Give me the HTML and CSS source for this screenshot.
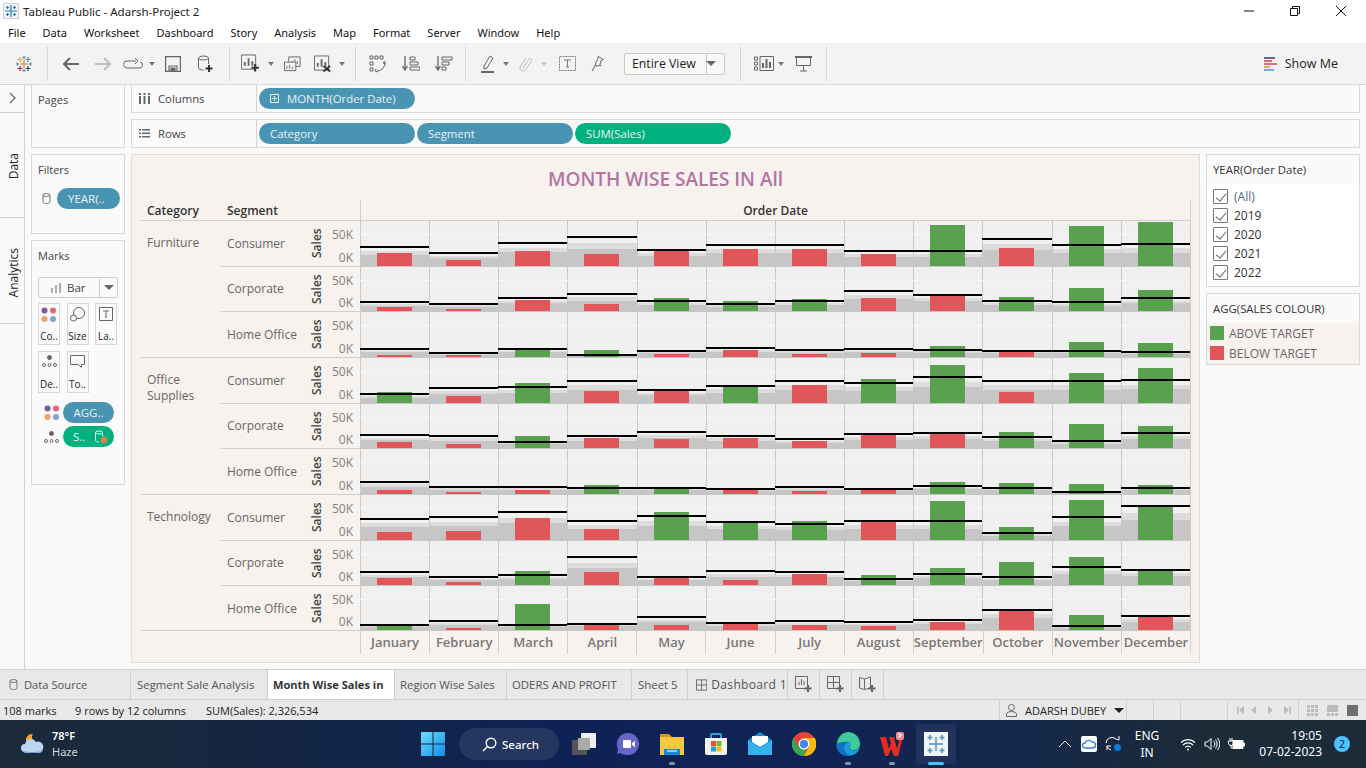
FILE: index.html
```html
<!DOCTYPE html>
<html lang="en">
<head>
<meta charset="utf-8">
<title>Tableau Public - Adarsh-Project 2</title>
<link rel="stylesheet" href="styles.css">
</head>
<body>
<div class="app">
  <header class="titlebar">
    <svg class="app-logo" width="16" height="16" viewBox="0 0 16 16"><rect x=".5" y=".5" width="15" height="15" fill="#eef4f8" stroke="#ccd"/><g stroke="#2f7ea8" stroke-width="1.2"><path d="M8 2v12M2 8h12"/><path d="M4.5 3v3M3 4.5h3M11.5 3v3M10 4.5h3M4.5 10v3M3 11.5h3M11.5 10v3M10 11.5h3"/></g></svg>
    <span class="title-text">Tableau Public - Adarsh-Project 2</span>
    <div class="winctl">
      <svg width="12" height="12" viewBox="0 0 12 12"><path d="M1 6h10" stroke="#111"/></svg>
      <svg width="12" height="12" viewBox="0 0 12 12"><path d="M1.5 3.5h7v7h-7zM3.5 3.5v-2h7v7h-2" fill="none" stroke="#111"/></svg>
      <svg width="12" height="12" viewBox="0 0 12 12"><path d="M1 1l10 10M11 1L1 11" stroke="#111"/></svg>
    </div>
  </header>
  <nav class="menubar"><span>File</span><span>Data</span><span>Worksheet</span><span>Dashboard</span><span>Story</span><span>Analysis</span><span>Map</span><span>Format</span><span>Server</span><span>Window</span><span>Help</span></nav>
  <div class="toolbar">
    <div class="tgroup g-logo">
      <svg width="18" height="18" viewBox="0 0 18 18" fill="none" stroke-width="1.1"><path d="M9 5v8M5 9h8" stroke="#e8762b"/><path d="M5 2v5M2.5 4.5h5" stroke="#e8a33d"/><path d="M13 2v5M10.5 4.5h5" stroke="#5b879b"/><path d="M5 11v5M2.500 13.500h5" stroke="#c72037"/><path d="M13 11v5M10.500 13.500h5" stroke="#1f447a"/><path d="M9 1v3M7.500 2.500h3M1 9h3M2.500 7.500v3M14 9h3M15.500 7.500v3M9 14v3M7.500 15.500h3" stroke="#59879b"/></svg>
    </div>
    <div class="tgroup g-file">
      <svg class="ic" width="18" height="16" viewBox="0 0 18 16" fill="none" stroke="#666" stroke-width="2"><path d="M17 8H2M8 2L2 8l6 6"/></svg>
      <svg class="ic" width="18" height="16" viewBox="0 0 18 16" fill="none" stroke="#bbb" stroke-width="2"><path d="M1 8h15M10 2l6 6-6 6"/></svg>
      <svg class="ic wide" width="20" height="14" viewBox="0 0 20 14" fill="none" stroke="#666"><path d="M13 4H4a3 3 0 000 7h12a3 3 0 001-6"/><path d="M12 1l3 3-3 3"/></svg>
      <i class="caret"></i>
      <svg class="ic" width="16" height="16" viewBox="0 0 16 16" fill="none" stroke="#666" stroke-width="1.2"><path d="M.6.6h14.800v14.800H.6zM4 15.400V10h8v5.400"/><path d="M6 12h4v3H6z" fill="#666"/></svg>
      <svg class="ic" width="16" height="18" viewBox="0 0 16 18" fill="none" stroke="#666"><ellipse cx="6.500" cy="3" rx="5" ry="2"/><path d="M1.500 3v10c0 1 2 2 5 2M11.500 3v6"/><path d="M12 10v7M8.500 13.500h7" stroke="#333" stroke-width="2"/></svg>
    </div>
    <div class="tgroup g-sheet">
      <svg class="ic" width="20" height="19" viewBox="0 0 20 19" fill="none" stroke="#666"><path d="M.5.500h15v15H.500z"/><path d="M4 12V8M8 12V4M12 12V7" stroke-width="2"/><path d="M15 10v8M11 14h8" stroke="#333" stroke-width="2.200"/></svg>
      <i class="caret"></i>
      <svg class="ic" width="18" height="16" viewBox="0 0 18 16" fill="none" stroke="#666"><path d="M5 .5h12v10H5z" fill="#f3f3f3"/><path d="M9 8V5M11.500 8V3M14 8V5"/><path d="M.5 6h12v9H.500z" fill="#f3f3f3"/><path d="M3 13v-3M6 13V9M9 13v-2"/></svg>
      <svg class="ic" width="18" height="18" viewBox="0 0 18 18" fill="none" stroke="#666"><path d="M.5.500h15v15H.500z"/><path d="M4 12V8M8 12V4M12 12V7" stroke-width="2"/><path d="M10 11l7 6M17 11l-7 6" stroke="#333" stroke-width="2"/></svg>
      <i class="caret"></i>
    </div>
    <div class="tgroup g-sort">
      <svg class="ic" width="18" height="18" viewBox="0 0 18 18" fill="none" stroke="#666"><path d="M1 1h3v3H1zM6 1h3v3H6zM11 1h3v3h-3zM1 7h3v3H1zM1 13h3v3H1z"/><path d="M16 7a8 8 0 01-8 9M7 14l-1 2 3 1M16 6l-2 2 3 1"/></svg>
      <svg class="ic" width="18" height="16" viewBox="0 0 18 16" fill="none" stroke="#666"><path d="M3 0v13M.5 10L3 14l2.500-4" stroke-width="1.300"/><path d="M8 1h5v3H8zM8 6h8v3H8zM8 11h10v3H8z"/></svg>
      <svg class="ic" width="18" height="16" viewBox="0 0 18 16" fill="none" stroke="#666"><path d="M3 0v13M.5 10L3 14l2.500-4" stroke-width="1.300"/><path d="M7 1h10v3H7zM7 6h7v3H7zM7 11h4v3H7z"/></svg>
    </div>
    <div class="tgroup g-mark">
      <svg class="ic" width="14" height="18" viewBox="0 0 14 18" fill="none" stroke="#666"><path d="M3 11L9 1l3 2-6 10-3 1z"/><path d="M0 17h13" stroke-width="2"/></svg>
      <i class="caret"></i>
      <svg class="ic" width="13" height="16" viewBox="0 0 13 16" fill="none" stroke="#bbb"><path d="M4 12l6-9a2 2 0 013 2l-7 9a3 3 0 01-5-3l6-9"/></svg>
      <i class="caret light"></i>
      <svg class="ic" width="17" height="15" viewBox="0 0 17 15" fill="none" stroke="#777"><path d="M.5.500h16v14H.500z" stroke-dasharray="2 1"/><path d="M5 4h7M8.500 4v7M7 11h3"/></svg>
      <svg class="ic" width="13" height="16" viewBox="0 0 13 16" fill="none" stroke="#666"><path d="M7 .5l5.500 3-2.500 1-1 4 1 1-6 .5L5 6l2-3z"/><path d="M4 10l-3 5"/></svg>
      <div class="fit"><span class="fit-label">Entire View</span><span class="fit-btn"><i class="caret dark"></i></span></div>
    </div>
    <div class="tgroup g-show">
      <svg class="ic" width="20" height="15" viewBox="0 0 20 15" fill="none" stroke="#666"><path d="M.5 1h3v3h-3zM.5 6h3v3h-3zM.5 11h3v3h-3zM6 .5h13.500v14H6z"/><path d="M9 12V7M12.500 12V3M16 12V6" stroke-width="2"/></svg>
      <i class="caret"></i>
      <svg class="ic" width="17" height="16" viewBox="0 0 17 16" fill="none" stroke="#666"><path d="M0 1h17" stroke-width="2"/><path d="M1.500 1.500v8h14v-8M8.500 10v5M5 15h7"/></svg>
    </div>
    <div class="showme">
      <svg width="15" height="15" viewBox="0 0 15 15"><path d="M0 1h11v2H0z" fill="#7a5c9a"/><path d="M0 4h8v2H0z" fill="#e06b75"/><path d="M0 7h13v2H0z" fill="#e06b75"/><path d="M0 10h6v2H0z" fill="#f0a268"/><path d="M0 13h10v2H0z" fill="#7fa6cf"/></svg>
      <span>Show Me</span>
    </div>
  </div>

  <main class="workspace">
    <aside class="rail">
      <div class="rail-top"><svg width="8" height="12" viewBox="0 0 8 12" fill="none" stroke="#666" stroke-width="1.200"><path d="M1 1l5 5-5 5"/></svg></div>
      <div class="rail-tab r-data"><span>Data</span></div>
      <div class="rail-tab r-analytics"><span>Analytics</span></div>
    </aside>
    <aside class="leftcol">
      <section class="card c-pages"><h3>Pages</h3></section>
      <section class="card c-filters">
        <h3>Filters</h3>
        <div class="filter-row">
          <svg width="9" height="11" viewBox="0 0 9 11" fill="none" stroke="#777"><ellipse cx="4.500" cy="2" rx="3.500" ry="1.500"/><path d="M1 2v7c0 2 7 2 7 0V2"/></svg>
          <span class="pill blue small-pill">YEAR(..</span>
        </div>
      </section>
      <section class="card c-marks">
        <h3>Marks</h3>
        <div class="marktype">
          <span class="mt-label"><svg width="10" height="10" viewBox="0 0 10 10"><path d="M0 5h2v5H0zM4 2h2v8H4zM8 0h2v10H8z" fill="#aaa"/></svg>Bar</span>
          <span class="mt-btn"><i class="caret dark"></i></span>
        </div>
        <div class="tiles">
          <div class="tile"><svg width="16" height="16" viewBox="0 0 16 16"><circle cx="3.500" cy="3.500" r="3" fill="#7a5c9a"/><circle cx="12" cy="3.500" r="3" fill="#e8637a"/><circle cx="3.500" cy="12" r="3" fill="#f0a268"/><circle cx="12" cy="12" r="3" fill="#7fa6cf"/></svg><span>Co..</span></div>
          <div class="tile"><svg width="15" height="15" viewBox="0 0 15 15" fill="none" stroke="#666"><circle cx="9" cy="6" r="5.500"/><circle cx="3.500" cy="11" r="3" fill="#fafafa"/></svg><span>Size</span></div>
          <div class="tile"><svg width="14" height="14" viewBox="0 0 14 14" fill="none" stroke="#666"><path d="M.5.500h13v13H.500z"/><path d="M4 4h6M7 4v6M6 10h2"/></svg><span>La..</span></div>
          <div class="tile"><svg width="15" height="12" viewBox="0 0 15 12" fill="none" stroke="#666"><circle cx="7.500" cy="2.500" r="2" fill="#666"/><circle cx="2" cy="10" r="1.500"/><circle cx="7.500" cy="10" r="1.500"/><circle cx="13" cy="10" r="1.500"/></svg><span>De..</span></div>
          <div class="tile"><svg width="15" height="14" viewBox="0 0 15 14" fill="none" stroke="#666"><path d="M.5.500h14v9h-3v3l-3-3H.500z"/></svg><span>To..</span></div>
        </div>
        <div class="mark-pill">
          <svg width="16" height="16" viewBox="0 0 16 16"><circle cx="3.500" cy="3.500" r="3" fill="#7a5c9a"/><circle cx="12" cy="3.500" r="3" fill="#e8637a"/><circle cx="3.500" cy="12" r="3" fill="#f0a268"/><circle cx="12" cy="12" r="3" fill="#7fa6cf"/></svg>
          <span class="pill blue">AGG..</span>
        </div>
        <div class="mark-pill">
          <svg width="15" height="12" viewBox="0 0 15 12" fill="none" stroke="#666"><circle cx="7.500" cy="2.500" r="2" fill="#666"/><circle cx="2" cy="10" r="1.500"/><circle cx="7.500" cy="10" r="1.500"/><circle cx="13" cy="10" r="1.500"/></svg>
          <span class="pill green pill-icon">S..<svg width="14" height="14" viewBox="0 0 14 14" fill="none"><ellipse cx="5" cy="2.500" rx="3.500" ry="1.500" stroke="#dff"/><path d="M1.500 2.500v8c0 1 2 1.500 3.500 1.500M8.500 2.500V6" stroke="#dff"/><circle cx="10" cy="10" r="3.500" fill="#c98a4b"/></svg></span>
        </div>
      </section>
    </aside>
    <div class="center">
      <div class="shelf">
        <div class="shelf-label"><svg width="11" height="11" viewBox="0 0 11 11" fill="#666"><path d="M0 0h2v2H0zM0 3h2v8H0zM4.500 0h2v2h-2zM4.500 3h2v8h-2zM9 0h2v2H9zM9 3h2v8H9z"/></svg><span>Columns</span></div>
        <div class="shelf-pills"><span class="pill blue shelf-pill"><svg class="plus" width="9" height="9" viewBox="0 0 9 9" fill="none" stroke="#e6f2f6"><path d="M.5.500h8v8h-8zM4.500 2v5M2 4.500h5"/></svg>MONTH(Order Date)</span></div>
      </div>
      <div class="shelf">
        <div class="shelf-label"><svg width="11" height="9" viewBox="0 0 11 9" fill="#666"><path d="M0 0h2v1.500H0zM3 0h8v1.500H3zM0 3.500h2V5H0zM3 3.500h8V5H3zM0 7h2v1.500H0zM3 7h8v1.500H3z"/></svg><span>Rows</span></div>
        <div class="shelf-pills"><span class="pill blue shelf-pill">Category</span><span class="pill blue shelf-pill">Segment</span><span class="pill green shelf-pill">SUM(Sales)</span></div>
      </div>
      <div class="stage">
        <section class="view">
          <h1 class="viz-title">MONTH WISE SALES IN All</h1>
          <div class="viz">
            <div class="viz-head"><span class="hcat">Category</span><span class="hseg">Segment</span><span class="hdate">Order Date</span></div>

            <div class="group">
              <div class="cat">Furniture</div>
              <div class="rows">
                <div class="row tall"><div class="rlabel"><span class="seg">Consumer</span><span class="axt">Sales</span><span class="ticks"><span>50K</span><span>0K</span></span></div><div class="cells">
<b class="c r" style="--b:13px;--l:19px"></b><b class="c r" style="--b:6px;--l:13px"></b><b class="c r" style="--b:15px;--l:23px"></b><b class="c r" style="--b:12px;--l:29px"></b><b class="c r" style="--b:15px;--l:16px"></b><b class="c r" style="--b:17px;--l:21px"></b><b class="c r" style="--b:17px;--l:21px"></b><b class="c r" style="--b:12px;--l:15px"></b><b class="c g" style="--b:41px;--l:15px"></b><b class="c r" style="--b:18px;--l:27px"></b><b class="c g" style="--b:40px;--l:21px"></b><b class="c g" style="--b:44px;--l:22px"></b></div></div>
                <div class="row"><div class="rlabel"><span class="seg">Corporate</span><span class="axt">Sales</span><span class="ticks"><span>50K</span><span>0K</span></span></div><div class="cells">
<b class="c r" style="--b:4px;--l:9px"></b><b class="c r" style="--b:2px;--l:7px"></b><b class="c r" style="--b:11px;--l:13px"></b><b class="c r" style="--b:7px;--l:17px"></b><b class="c g" style="--b:13px;--l:10px"></b><b class="c g" style="--b:10px;--l:7px"></b><b class="c g" style="--b:12px;--l:10px"></b><b class="c r" style="--b:13px;--l:20px"></b><b class="c r" style="--b:15px;--l:16px"></b><b class="c g" style="--b:14px;--l:10px"></b><b class="c g" style="--b:23px;--l:9px"></b><b class="c g" style="--b:21px;--l:13px"></b></div></div>
                <div class="row tall"><div class="rlabel"><span class="seg">Home Office</span><span class="axt">Sales</span><span class="ticks"><span>50K</span><span>0K</span></span></div><div class="cells">
<b class="c r" style="--b:2px;--l:8px"></b><b class="c r" style="--b:2px;--l:4px"></b><b class="c g" style="--b:7px;--l:8px"></b><b class="c g" style="--b:7px;--l:2px"></b><b class="c r" style="--b:3px;--l:6px"></b><b class="c r" style="--b:7px;--l:9px"></b><b class="c r" style="--b:3px;--l:7px"></b><b class="c r" style="--b:4px;--l:8px"></b><b class="c g" style="--b:11px;--l:7px"></b><b class="c r" style="--b:5px;--l:6px"></b><b class="c g" style="--b:15px;--l:6px"></b><b class="c g" style="--b:14px;--l:5px"></b></div></div>
              </div>
            </div>

            <div class="group">
              <div class="cat">Office<br>Supplies</div>
              <div class="rows">
                <div class="row tall"><div class="rlabel"><span class="seg">Consumer</span><span class="axt">Sales</span><span class="ticks"><span>50K</span><span>0K</span></span></div><div class="cells">
<b class="c g" style="--b:11px;--l:9px"></b><b class="c r" style="--b:7px;--l:15px"></b><b class="c g" style="--b:20px;--l:16px"></b><b class="c r" style="--b:12px;--l:22px"></b><b class="c r" style="--b:12px;--l:13px"></b><b class="c g" style="--b:16px;--l:17px"></b><b class="c r" style="--b:18px;--l:22px"></b><b class="c g" style="--b:24px;--l:20px"></b><b class="c g" style="--b:38px;--l:26px"></b><b class="c r" style="--b:11px;--l:22px"></b><b class="c g" style="--b:30px;--l:22px"></b><b class="c g" style="--b:35px;--l:23px"></b></div></div>
                <div class="row"><div class="rlabel"><span class="seg">Corporate</span><span class="axt">Sales</span><span class="ticks"><span>50K</span><span>0K</span></span></div><div class="cells">
<b class="c r" style="--b:6px;--l:13px"></b><b class="c r" style="--b:4px;--l:12px"></b><b class="c g" style="--b:12px;--l:6px"></b><b class="c r" style="--b:10px;--l:12px"></b><b class="c r" style="--b:9px;--l:16px"></b><b class="c r" style="--b:10px;--l:12px"></b><b class="c r" style="--b:7px;--l:9px"></b><b class="c r" style="--b:13px;--l:14px"></b><b class="c r" style="--b:14px;--l:15px"></b><b class="c g" style="--b:16px;--l:11px"></b><b class="c g" style="--b:24px;--l:7px"></b><b class="c g" style="--b:22px;--l:15px"></b></div></div>
                <div class="row tall"><div class="rlabel"><span class="seg">Home Office</span><span class="axt">Sales</span><span class="ticks"><span>50K</span><span>0K</span></span></div><div class="cells">
<b class="c r" style="--b:4px;--l:12px"></b><b class="c r" style="--b:2px;--l:7px"></b><b class="c r" style="--b:4px;--l:7px"></b><b class="c g" style="--b:9px;--l:6px"></b><b class="c g" style="--b:5px;--l:6px"></b><b class="c r" style="--b:4px;--l:5px"></b><b class="c r" style="--b:3px;--l:7px"></b><b class="c r" style="--b:4px;--l:5px"></b><b class="c g" style="--b:12px;--l:8px"></b><b class="c g" style="--b:11px;--l:6px"></b><b class="c g" style="--b:10px;--l:2px"></b><b class="c g" style="--b:9px;--l:6px"></b></div></div>
              </div>
            </div>

            <div class="group">
              <div class="cat">Technology</div>
              <div class="rows">
                <div class="row tall"><div class="rlabel"><span class="seg">Consumer</span><span class="axt">Sales</span><span class="ticks"><span>50K</span><span>0K</span></span></div><div class="cells">
<b class="c r" style="--b:8px;--l:21px"></b><b class="c r" style="--b:9px;--l:23px"></b><b class="c r" style="--b:22px;--l:28px"></b><b class="c r" style="--b:11px;--l:19px"></b><b class="c g" style="--b:28px;--l:24px"></b><b class="c g" style="--b:17px;--l:18px"></b><b class="c g" style="--b:19px;--l:16px"></b><b class="c r" style="--b:18px;--l:19px"></b><b class="c g" style="--b:39px;--l:19px"></b><b class="c g" style="--b:13px;--l:7px"></b><b class="c g" style="--b:40px;--l:23px"></b><b class="c g" style="--b:33px;--l:34px"></b></div></div>
                <div class="row"><div class="rlabel"><span class="seg">Corporate</span><span class="axt">Sales</span><span class="ticks"><span>50K</span><span>0K</span></span></div><div class="cells">
<b class="c r" style="--b:7px;--l:13px"></b><b class="c r" style="--b:3px;--l:8px"></b><b class="c g" style="--b:14px;--l:10px"></b><b class="c r" style="--b:13px;--l:28px"></b><b class="c r" style="--b:7px;--l:8px"></b><b class="c r" style="--b:5px;--l:14px"></b><b class="c r" style="--b:11px;--l:13px"></b><b class="c g" style="--b:10px;--l:6px"></b><b class="c g" style="--b:17px;--l:11px"></b><b class="c g" style="--b:23px;--l:8px"></b><b class="c g" style="--b:28px;--l:18px"></b><b class="c g" style="--b:14px;--l:15px"></b></div></div>
                <div class="row"><div class="rlabel"><span class="seg">Home Office</span><span class="axt">Sales</span><span class="ticks"><span>50K</span><span>0K</span></span></div><div class="cells">
<b class="c g" style="--b:4px;--l:5px"></b><b class="c r" style="--b:2px;--l:9px"></b><b class="c g" style="--b:26px;--l:5px"></b><b class="c r" style="--b:5px;--l:6px"></b><b class="c r" style="--b:5px;--l:13px"></b><b class="c r" style="--b:6px;--l:7px"></b><b class="c r" style="--b:5px;--l:9px"></b><b class="c r" style="--b:4px;--l:8px"></b><b class="c r" style="--b:8px;--l:10px"></b><b class="c r" style="--b:19px;--l:20px"></b><b class="c g" style="--b:15px;--l:4px"></b><b class="c r" style="--b:13px;--l:14px"></b></div></div>
              </div>
            </div>

            <div class="months"><span>January</span><span>February</span><span>March</span><span>April</span><span>May</span><span>June</span><span>July</span><span>August</span><span>September</span><span>October</span><span>November</span><span>December</span></div>
          </div>
        </section>
        <aside class="sidecards">
          <section class="qf">
            <h3>YEAR(Order Date)</h3>
            <ul class="qf-list">
              <li class="all"><i class="check"></i>(All)</li>
              <li><i class="check"></i>2019</li>
              <li><i class="check"></i>2020</li>
              <li><i class="check"></i>2021</li>
              <li><i class="check"></i>2022</li>
            </ul>
          </section>
          <section class="legend">
            <h3>AGG(SALES COLOUR)</h3>
            <ul class="lg-list">
              <li><i class="sw g"></i>ABOVE TARGET</li>
              <li><i class="sw r"></i>BELOW TARGET</li>
            </ul>
          </section>
        </aside>
      </div>
    </div>
  </main>

  <div class="tabs">
    <div class="tab t-ds"><svg width="9" height="11" viewBox="0 0 9 11" fill="none" stroke="#777"><ellipse cx="4.500" cy="2" rx="3.500" ry="1.500"/><path d="M1 2v7c0 2 7 2 7 0V2"/></svg>Data Source</div>
    <div class="tab t-seg">Segment Sale Analysis</div>
    <div class="tab t-month active">Month Wise Sales in</div>
    <div class="tab t-reg">Region Wise Sales</div>
    <div class="tab t-ord">ODERS AND PROFIT</div>
    <div class="tab t-sh5">Sheet 5</div>
    <div class="tab t-db"><svg width="12" height="12" viewBox="0 0 12 12" fill="none" stroke="#666"><path d="M.5.500h11v11H.500zM6 .5v11M.5 6h11"/></svg>Dashboard 1</div>
    <div class="tab t-add"><svg width="17" height="17" viewBox="0 0 17 17" fill="none" stroke="#666"><path d="M.5.500h12v12H.500zM4 9V6M6.500 9V3M9 9V5"/><path d="M13 9v7M9.500 12.500h7" stroke-width="2"/></svg></div>
    <div class="tab t-add"><svg width="17" height="17" viewBox="0 0 17 17" fill="none" stroke="#666"><path d="M.5.500h12v12H.500zM6.500.5v12M.5 6.500h12"/><path d="M13 9v7M9.500 12.500h7" stroke-width="2"/></svg></div>
    <div class="tab t-add"><svg width="17" height="17" viewBox="0 0 17 17" fill="none" stroke="#666"><path d="M.5 1.500l5 1.500 6-2v11l-6 1.500-5-1.500zM5.500 3v10"/><path d="M13 9v7M9.500 12.500h7" stroke-width="2"/></svg></div>
    <div class="tab-rest"></div>
  </div>
  <div class="status">
    <div class="st-info"><span class="si1">108 marks</span><span class="si2">9 rows by 12 columns</span><span class="si3">SUM(Sales): 2,326,534</span></div>
    <div class="st-cell st-user"><svg width="11" height="13" viewBox="0 0 11 13" fill="none" stroke="#666"><circle cx="5.500" cy="3.500" r="3"/><path d="M.5 12.500V10c0-1 2-2.500 5-2.500s5 1.500 5 2.500v2.500z"/></svg><span>ADARSH DUBEY</span><i class="caret black"></i></div>
    <div class="st-cell st-a"></div><div class="st-cell st-a"></div><div class="st-cell st-b"></div>
    <div class="st-cell st-nav">
      <svg width="54" height="8" viewBox="0 0 54 8" fill="#bbb"><path d="M0 0h1.500v8H0zM7 0v8L2 4zM19 0v8l-5-4zM31 0v8l5-4zM47 0v8l5-4zM52.500 0H54v8h-1.500z"/></svg>
    </div>
    <div class="st-cell st-views">
      <svg width="11" height="11" viewBox="0 0 11 11" fill="#bbb"><path d="M0 0h3v3H0zM4 0h3v3H4zM8 0h3v3H8zM0 4h3v3H0zM4 4h3v3H4zM8 4h3v3H8zM0 8h3v3H0zM4 8h3v3H4zM8 8h3v3H8z"/></svg>
      <svg width="11" height="11" viewBox="0 0 11 11" fill="#bbb"><path d="M0 0h11v7H0zM0 8h3v3H0zM4 8h3v3H4zM8 8h3v3H8z"/></svg>
      <svg width="11" height="11" viewBox="0 0 11 11" fill="#6e6e6e"><path d="M0 0h11v11H0z"/></svg>
    </div>
  </div>

  <footer class="taskbar">
    <div class="tb-left">
      <svg class="weather" width="25" height="24" viewBox="0 0 25 24"><path d="M6 9a6 6 0 017-7 5 5 0 003 8z" fill="#f4a325"/><path d="M5 20a4 4 0 010-8 6 6 0 0111-2 5 5 0 014 10z" fill="#bcd6f4"/><path d="M2 18c5 3 15 3 21 0a4 4 0 01-3 3H5a4 4 0 01-3-3z" fill="#7fb0e6"/></svg>
      <div class="wtext"><b>78°F</b><span>Haze</span></div>
    </div>
    <div class="tb-center">
      <svg class="win" width="24" height="24" viewBox="0 0 24 24"><defs><linearGradient id="wg" x1="0" y1="0" x2="1" y2="1"><stop offset="0" stop-color="#6fdcf7"/><stop offset="1" stop-color="#0f8fe8"/></linearGradient></defs><path d="M0 1a1 1 0 011-1h10.500v11.500H0zM12.500 0H23a1 1 0 011 1v10.500H12.500zM0 12.500h11.500V24H1a1 1 0 01-1-1zM12.500 12.500H24V23a1 1 0 01-1 1H12.500z" fill="url(#wg)"/></svg>
      <div class="search"><svg width="15" height="15" viewBox="0 0 15 15" fill="none" stroke="#fff" stroke-width="1.400"><circle cx="9" cy="6" r="4.800"/><path d="M5.500 9.500L1 14"/></svg><span>Search</span></div>
      <svg class="tv" width="24" height="24" viewBox="0 0 24 24"><rect x="0" y="8" width="15" height="15" rx="1" fill="#555"/><rect x="9" y="1" width="15" height="15" rx="1" fill="#eee"/><rect x="6" y="6" width="12" height="12" rx="1" fill="#aaa"/></svg>
      <div class="apps">
        <span class="appi"><svg width="24" height="24" viewBox="0 0 24 24"><path d="M12 1a11 11 0 110 22 12 12 0 01-8-2l-3 1 1-5a11 11 0 0110-16z" fill="#6a63c9"/><rect x="7" y="8" width="8" height="8" rx="1" fill="#fff"/><path d="M16 11l3-2v6l-3-2z" fill="#fff"/></svg></span>
        <span class="appi dot"><svg width="24" height="24" viewBox="0 0 24 24"><path d="M0 2h9l3 3h12v4H0z" fill="#d69a14"/><path d="M0 5h24v18H0z" fill="#f5c83f"/><path d="M4 17h16v6H4z" fill="#1e88d4"/><path d="M7 18h10v2H7z" fill="#8bcdf5"/></svg></span>
        <span class="appi"><svg width="24" height="24" viewBox="0 0 24 24"><path d="M7 6V3a1 1 0 011-1h8a1 1 0 011 1v3" fill="none" stroke="#29a3d9" stroke-width="2"/><path d="M1 6h22v15a2 2 0 01-2 2H3a2 2 0 01-2-2z" fill="#f2f2f2"/><path d="M7 9h5v5H7z" fill="#e8552f"/><path d="M12.500 9h5v5h-5z" fill="#7cb82f"/><path d="M7 14.500h5v5H7z" fill="#1ea1e8"/><path d="M12.500 14.500h5v5h-5z" fill="#fbbc09"/></svg></span>
        <span class="appi"><svg width="24" height="24" viewBox="0 0 24 24"><path d="M0 8l12-8 12 8v15H0z" fill="#1689d8"/><path d="M0 8l12 8 12-8v15H0z" fill="#34b2ee"/><path d="M4 4h16v6l-8 5-8-5z" fill="#fff"/></svg></span>
        <span class="appi"><svg width="24" height="24" viewBox="0 0 24 24"><circle cx="12" cy="12" r="12" fill="#ea4335"/><path d="M12 24A12 12 0 011.500 6L7 15.500l5 .5 3-2-3 10z" fill="#34a853"/><path d="M12 6h10.800A12 12 0 0112 24l5-9-1-5z" fill="#fbbc05"/><circle cx="12" cy="12" r="5.500" fill="#fff"/><circle cx="12" cy="12" r="4.300" fill="#4285f4"/></svg></span>
        <span class="appi dot"><svg width="24" height="24" viewBox="0 0 24 24"><path d="M12 0a12 12 0 0112 12c0 4-3 6-6 6-4 0-5-2-4-4 1-1 0-4-3-4-4 0-8 4-10 3A12 12 0 0112 0z" fill="#3ecb9a"/><path d="M0 13a12 12 0 0017 10c-5 1-9-2-9-7 0-3 2-6 5-6-5-1-12 1-13 3z" fill="#1271c4"/><path d="M13 10c-3 0-5 3-5 6 0 5 4 8 9 7a12 12 0 007-8c-2 3-6 4-8 3-3-1-3-4-1-5 0-1-1-3-2-3z" fill="#1b9de2"/></svg></span>
        <span class="appi dot"><svg width="24" height="24" viewBox="0 0 24 24"><path d="M0 5h6l3 12 2-6-2-6h5l3 12 3-12h3l-5 19h-4l-3-7-3 7H5z" fill="#e62b20"/><rect x="16" y="0" width="8" height="8" rx="2" fill="#f08a8a"/><path d="M18 2h3v2h-2v1h2" fill="none" stroke="#fff"/></svg></span>
        <span class="appi active"><svg width="24" height="24" viewBox="0 0 24 24"><rect width="24" height="24" fill="#f2f6f8"/><g stroke="#4f92b8" stroke-width="1.400"><path d="M12 5v14M5 12h14"/><path d="M6 3v5M3.500 5.500h5M18 3v5M15.500 5.500h5M6 16v5M3.500 18.500h5M18 16v5M15.500 18.500h5"/></g></svg></span>
      </div>
    </div>
    <div class="tray">
      <svg class="t-chev" width="14" height="8" viewBox="0 0 14 8" fill="none" stroke="#fff"><path d="M1 7l6-6 6 6"/></svg>
      <svg class="t-cloud" width="16" height="16" viewBox="0 0 16 16"><rect width="16" height="16" rx="2" fill="#fff"/><path d="M4 12a2.500 2.500 0 010-5 4 4 0 017-1 3 3 0 011 6z" fill="none" stroke="#2f7fe0" stroke-width="1.300"/></svg>
      <svg class="t-sync" width="16" height="16" viewBox="0 0 16 16" fill="none" stroke="#fff"><path d="M1 7a6 6 0 0110-4l3 1V0M2 14V10h4"/><path d="M2 10a6 6 0 004 4"/><circle cx="12.500" cy="11.500" r="3.500" fill="#0a7bdc" stroke="none"/></svg>
      <div class="lang"><span>ENG</span><span>IN</span></div>
      <svg class="t-wifi" width="16" height="13" viewBox="0 0 16 13" fill="none" stroke="#fff" stroke-width="1.100"><path d="M1 4.500a10 10 0 0114 0M3 7a7 7 0 0110 0M5 9.500a4 4 0 016 0"/><circle cx="8" cy="11.500" r="1" fill="#fff" stroke="none"/></svg>
      <svg class="t-vol" width="16" height="14" viewBox="0 0 16 14" fill="none" stroke="#fff"><path d="M1 5h2.500L7 1.500v11L3.500 9H1zM9.500 4a4 4 0 010 6M11.500 2.500a7 7 0 010 9M13.500 1a9 9 0 010 12"/></svg>
      <svg class="t-batt" width="17" height="12" viewBox="0 0 17 12" fill="none" stroke="#fff"><path d="M5 2.500h10v8H5z" fill="#fff"/><path d="M15.500 5h1v3h-1z" fill="#fff"/><path d="M2 0v3M4 0v3M.5 3h5v2a2.500 2.500 0 01-5 0zM3 7v3h2"/></svg>
      <div class="clock"><span>19:05</span><span>07-02-2023</span></div>
      <span class="badge">2</span>
    </div>
  </footer>
</div>
</body>
</html>
```

FILE: styles.css
```css
*{box-sizing:border-box}
html,body{margin:0;padding:0}
body{width:1366px;height:768px;overflow:hidden;font-family:"Open Sans","Noto Sans","Liberation Sans",sans-serif;font-size:12px;color:#333;background:#fff}
h1,h3,ul{margin:0;padding:0;font-weight:400}
ul{list-style:none}
i{display:block}
.app{display:flex;flex-direction:column;height:768px}

.titlebar{height:22px;display:flex;align-items:center;padding-left:3px;background:#fff;color:#222;flex:none}
.app-logo{margin-right:4px}
.title-text{font-family:"Noto Sans",sans-serif;font-size:11.500px}
.winctl{margin-left:auto;display:flex;gap:34px;padding-right:19px}

.menubar{height:21px;display:flex;align-items:center;gap:17px;padding-left:8px;color:#111;flex:none;font-family:"Noto Sans",sans-serif;font-size:11px}

.toolbar{height:41px;background:#f3f3f3;display:flex;align-items:center;flex:none}
.tgroup{display:flex;align-items:center;height:35px;border-right:1px solid #d8d8d8;flex:none}
.caret{width:0;height:0;border-left:3.500px solid transparent;border-right:3.500px solid transparent;border-top:4px solid #777}
.caret.light{border-top-color:#c4c4c4}
.caret.dark{border-left-width:5px;border-right-width:5px;border-top:5px solid #666}
.caret.black{border-left-width:5px;border-right-width:5px;border-top:5px solid #222}
.g-logo{width:48px;justify-content:center}
.g-file{width:182px;padding-left:14px}
.g-file .ic:nth-of-type(1){margin-right:14px}
.g-file .ic:nth-of-type(2){margin-right:11px}
.g-file .ic:nth-of-type(3){margin-right:6px}
.g-file .caret{margin-right:10px}
.g-file .ic:nth-of-type(4){margin-right:16px}
.g-sheet{width:126px;padding-left:11px}
.g-sheet .ic:nth-of-type(1){margin-right:8px}
.g-sheet .caret{margin-right:10px}
.g-sheet .ic:nth-of-type(2){margin-right:13px}
.g-sheet .ic:nth-of-type(3){margin-right:8px}
.g-sort{width:110px;padding-left:13px;gap:15px}
.g-mark{width:275px;padding-left:15px}
.g-mark .ic:nth-of-type(1){margin-right:8px}
.g-mark .caret:nth-of-type(1){margin-right:10px}
.g-mark .ic:nth-of-type(2){margin-right:9px}
.g-mark .caret.light{margin-right:12px}
.g-mark .ic:nth-of-type(3){margin-right:15px}
.g-mark .ic:nth-of-type(4){margin-right:20px}
.fit{width:101px;height:22px;border:1px solid #c8c8c8;border-radius:2px;display:flex;align-items:center;background:#f8f8f8}
.fit-label{flex:1;padding-left:7px;color:#222;font-size:12.300px}
.fit-btn{width:18px;height:100%;border-left:1px solid #c8c8c8;display:flex;align-items:center;justify-content:center}
.g-show{width:86px;padding-left:13px}
.g-show .ic:nth-of-type(1){margin-right:4px}
.g-show .caret{margin-right:11px}
.showme{margin-left:auto;margin-right:28px;display:flex;align-items:center;gap:6px;color:#222;font-size:12.500px}

.workspace{height:585px;display:flex;background:linear-gradient(#d2d2d2,#d2d2d2) 0 0/100% 1px no-repeat,#fafafa;flex:none}
.rail{width:25px;border-right:1px solid #d2d2d2;flex:none;color:#222}
.rail-top{height:29px;border-bottom:1px solid #d2d2d2;display:flex;align-items:center;justify-content:center;padding-left:2px}
.rail-tab{border-bottom:1px solid #d2d2d2;display:flex;align-items:center;justify-content:center;padding-left:3px}
.rail-tab span{writing-mode:vertical-rl;transform:rotate(180deg)}
.r-data{height:105px;padding-top:2px}
.r-analytics{height:106px;padding-top:4px}
.leftcol{width:94px;margin-left:6px;display:flex;flex-direction:column;gap:6px;flex:none}
.card{border:1px solid #d9d9d9;background:#fafafa;padding-left:6px}
.card h3{font-size:11px;color:#444;line-height:16px}
.c-pages{height:64px;padding-top:7px}
.c-filters{height:80px;padding-top:7px}
.c-marks{height:245px;padding-top:7px}
.filter-row{display:flex;align-items:center;gap:6px;margin-top:10px;padding-left:4px}
.pill{display:flex;align-items:center;height:21px;border-radius:11px;color:#e6f2f6;flex:none;font-size:11.500px}
.pill.blue{background:#4a94b3}
.pill.green{background:#00b180}
.small-pill{width:63px;padding-left:11px}
.marktype{width:80px;height:21px;margin-top:13px;border:1px solid #cfcfcf;border-radius:2px;display:flex;align-items:center;background:#fafafa}
.mt-label{flex:1;display:flex;align-items:center;gap:6px;padding-left:12px;color:#444;font-size:11.500px}
.mt-btn{width:18px;height:100%;border-left:1px solid #cfcfcf;display:flex;align-items:center;justify-content:center}
.tiles{display:grid;grid-template-columns:repeat(3,22px);grid-auto-rows:42px;column-gap:6.500px;row-gap:6px;margin-top:5px}
.tile{border:1px solid #d6d6d6;display:flex;flex-direction:column;align-items:center;justify-content:space-between;padding:3px 0 1px;overflow:hidden;font-size:10px;color:#222;line-height:13px}
.mark-pill{display:flex;align-items:center;margin-top:3px;padding-left:6px;gap:0}
.tiles + .mark-pill{margin-top:9px}
.mark-pill svg:first-child{flex:none}
.mark-pill .pill{width:51px;justify-content:center;margin-left:auto;margin-right:10px}
.pill-icon{justify-content:flex-start!important;padding-left:10px;gap:9px}

.center{width:1229px;margin-left:6px;display:flex;flex-direction:column;gap:6px;flex:none}
.shelf{height:29px;display:flex;border:1px solid #d9d9d9;background:#fafafa;flex:none}
.shelf-label{width:125px;border-right:1px solid #d4d4d4;display:flex;align-items:center;gap:8px;padding-left:7px;color:#444;font-size:11.300px}
.shelf-pills{display:flex;align-items:center;gap:2px;padding-left:2px}
.shelf-pill{width:156px;padding-left:11px;font-size:11.400px}
.plus{margin-right:8px}

.stage{display:flex;gap:6px;height:509px}
.view{width:1069px;height:509px;background:#f7f2ee;border:1px solid #dcdcdc;flex:none}
.viz-title{height:45px;padding-top:12px;text-align:center;color:#b474a2;font-size:19px;line-height:24px;font-weight:600}
.viz{margin-left:9px;width:1050px}
.viz-head{height:21px;display:flex;align-items:center;border-bottom:1px solid #cfcfcf;font-weight:600;color:#333;font-size:12px}
.hcat{width:80px;padding-left:6px}
.hseg{width:139px;padding-left:6px}
.hdate{width:831px;height:100%;display:flex;align-items:center;justify-content:center;border-left:1px solid #cfcfcf;border-right:1px solid #cfcfcf}
.group{display:flex}
.cat{width:80px;padding:14px 0 0 6px;line-height:16px;color:#666;border-bottom:1px solid #cfcfcf}
.rows{width:970px}
.row{height:45px;display:flex}
.row.tall{height:46px}
.rlabel{width:139px;display:flex;align-items:stretch;border-bottom:1px solid #cfcfcf;flex:none}
.seg{width:87px;padding-left:6px;display:flex;align-items:center;color:#666}
.row:nth-child(2) .seg{padding-bottom:2px}
.axt{width:18px;writing-mode:vertical-rl;transform:rotate(180deg);text-align:center;font-size:12px;font-weight:600;color:#444;line-height:18px}
.ticks{flex:1;display:flex;flex-direction:column;justify-content:space-between;align-items:flex-end;padding:6px 7px 0 0;line-height:16px;color:#808080}
.cells{width:831px;display:grid;grid-template-columns:repeat(12,1fr);border-right:1px solid #c8c8c8;padding-right:0}
.c{position:relative;background:
  linear-gradient(#f5f5f5,#f5f5f5) 0 13px/100% 1px no-repeat,
  linear-gradient(#c8c8c8,#c8c8c8) 0 0/1px 100% no-repeat,
  linear-gradient(to top,#c6c6c6 calc(var(--l)*.6 + 1px),#dcdcdc 0,#dcdcdc calc(var(--l)*.8 + 1px),#f0f0f0 0)}
.c::before{content:"";position:absolute;left:17px;width:35px;bottom:1px;height:var(--b)}
.c.r::before{background:#e15759}
.c.g::before{background:#59a14f}
.c::after{content:"";position:absolute;left:0;right:0;bottom:var(--l);height:2px;background:#000}
.months{margin-left:219px;width:831px;height:22px;display:grid;grid-template-columns:repeat(12,1fr);border-right:1px solid #cfcfcf;font-size:13px;color:#777;font-weight:600}
.months span{border-left:1px solid #cfcfcf;text-align:center;line-height:23px;white-space:nowrap}

.sidecards{width:154px;display:flex;flex-direction:column;gap:6px;flex:none}
.qf{height:133px;border:1px solid #d9d9d9;background:#fff}
.qf h3,.legend h3{height:29px;background:#fafafa;padding:7px 0 0 6px;line-height:16px;color:#333;font-size:11.400px}
.qf-list{padding:3px 0 0 6px}
.qf-list li{display:flex;align-items:center;height:19px;color:#333;gap:6px}
.qf-list li.all{color:#4a6a8a}
.check{width:15px;height:15px;border:1px solid #777;border-radius:1px;position:relative;background:#fff}
.check::after{content:"";position:absolute;left:4px;top:1px;width:5px;height:9px;border:solid #666;border-width:0 1.500px 1.500px 0;transform:rotate(40deg)}
.legend{height:72px;border:1px solid #d9d9d9;background:#f7f2ee}
.lg-list{padding-top:0}
.lg-list li{display:flex;align-items:center;height:20px;padding-left:3px;gap:5px;color:#666}
.sw{width:14px;height:14px}
.sw.g{background:#59a14f}
.sw.r{background:#e15759}

.tabs{height:31px;background:#e8e8e8;border-top:1px solid #d0d0d0;border-bottom:1px solid #d0d0d0;display:flex;flex:none;font-size:11.400px}
.tab{display:flex;align-items:center;border-right:1px solid #d0d0d0;color:#555;padding-left:6px;white-space:nowrap;flex:none;gap:6px}
.t-ds{width:131px;padding-left:9px;font-size:11.200px}
.t-seg{width:137px}
.t-month{width:127px;background:#fff;color:#333;font-weight:700;padding-left:5px;font-size:11.100px}
.t-reg{width:112px;padding-left:5px}
.t-ord{width:125px;padding-left:5px}
.t-sh5{width:56px}
.t-db{width:100px;padding-left:8px;gap:4px;font-size:12px;letter-spacing:.35px}
.t-add{width:32px;justify-content:center;padding-left:0}
.tab-rest{flex:1}
.status{height:20px;background:#e8e8e8;display:flex;align-items:stretch;flex:none;font-size:11px;color:#222}
.st-info{width:999px;display:flex;align-items:center;padding-left:3px}
.si1{width:72px}
.si2{width:131px}
.st-cell{border-left:1px solid #d0d0d0;display:flex;align-items:center}
.st-user{width:127px;padding-left:6px;gap:8px;font-size:11px;color:#222;white-space:nowrap}
.st-a{width:27px}
.st-b{width:47px}
.st-nav{width:71px;padding-left:9px}
.st-views{flex:1;border-left:1px solid #d0d0d0;padding-left:8px;gap:9px}

.taskbar{height:48px;background:linear-gradient(90deg,#1c2b38 0,#132544 22%,#0f2256 42%,#102455 60%,#14284a 75%,#1c2b38 88%,#1c2b38 100%);display:flex;align-items:center;flex:none;color:#fff;position:relative;font-family:"Noto Sans",sans-serif}
.tb-left{width:421px;display:flex;align-items:center;padding-left:20px;gap:7px;flex:none}
.wtext{display:flex;flex-direction:column;font-size:11px;line-height:16px}
.wtext b{font-weight:600}
.wtext span{color:#cfd6de}
.tb-center{display:flex;align-items:center;flex:none}
.search{width:100px;height:32px;margin-left:14px;border-radius:16px;background:#253660;display:flex;align-items:center;gap:5px;padding-left:23px;font-size:11.500px;font-weight:500}
.tv{margin-left:13px}
.apps{display:flex;gap:20px;margin-left:20px}
.appi{position:relative;width:24px;height:24px;display:block}
.appi svg{display:block}
.appi.dot::after{content:"";position:absolute;left:9px;bottom:-9px;width:6px;height:3px;border-radius:2px;background:#8a93a6}
.appi.active::before{content:"";position:absolute;left:-8px;top:-8px;width:40px;height:40px;border-radius:4px;background:#22335a}
.appi.active svg{position:relative}
.appi.active::after{content:"";position:absolute;left:4px;bottom:-9px;width:16px;height:3px;border-radius:2px;background:#4cc2ff}
.tray{position:absolute;right:0;top:0;height:48px;width:308px;display:flex;align-items:center;font-size:12px}
.t-chev{margin-left:0}
.t-cloud{margin-left:9px}
.t-sync{margin-left:8px}
.lang{width:46px;display:flex;flex-direction:column;align-items:center;line-height:17px;margin-left:3px}
.t-wifi{margin-left:10px}
.t-vol{margin-left:8px}
.t-batt{margin-left:8px}
.clock{width:77px;display:flex;flex-direction:column;align-items:flex-end;line-height:16px}
.badge{width:16px;height:16px;border-radius:50%;background:#4cc2ff;color:#10243a;font-size:10.500px;text-align:center;line-height:16px;margin-left:12px}
```
